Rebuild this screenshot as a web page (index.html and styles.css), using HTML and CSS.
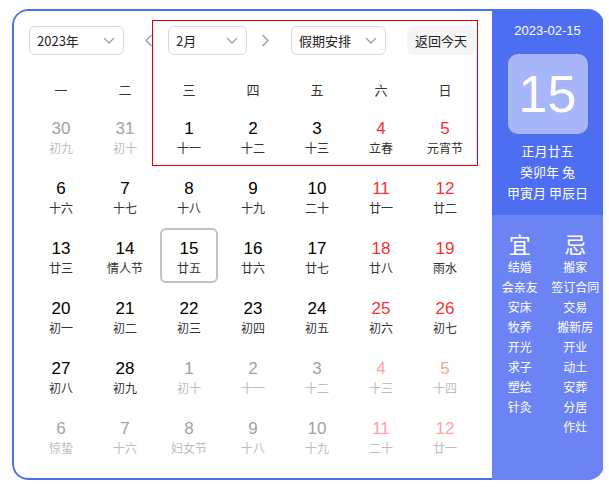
FILE: index.html
```html
<!DOCTYPE html>
<html lang="zh-CN">
<head>
<meta charset="utf-8">
<title>万年历</title>
<link rel="stylesheet" href="styles.css">
</head>
<body>
<div class="cal">
  <div class="main">
    <div class="toolbar">
      <div class="select sel-year"><span>2023年</span><svg class="caret" width="12" height="7" viewBox="0 0 12 7"><path d="M1 1l5 5 5-5" fill="none" stroke="#9a9ea8" stroke-width="1.3"/></svg></div>
      <div class="nav nav-prev"><svg width="9" height="13" viewBox="0 0 9 13"><path d="M7.5 1L2 6.5 7.5 12" fill="none" stroke="#a0a4ad" stroke-width="1.5"/></svg></div>
      <div class="select sel-month"><span>2月</span><svg class="caret" width="12" height="7" viewBox="0 0 12 7"><path d="M1 1l5 5 5-5" fill="none" stroke="#9a9ea8" stroke-width="1.3"/></svg></div>
      <div class="nav nav-next"><svg width="9" height="13" viewBox="0 0 9 13"><path d="M1.5 1L7 6.5 1.5 12" fill="none" stroke="#a0a4ad" stroke-width="1.5"/></svg></div>
      <div class="select sel-holiday"><span>假期安排</span><svg class="caret" width="12" height="7" viewBox="0 0 12 7"><path d="M1 1l5 5 5-5" fill="none" stroke="#9a9ea8" stroke-width="1.3"/></svg></div>
      <div class="today-btn">返回今天</div>
    </div>
    <div class="weekdays">
      <div>一</div><div>二</div><div>三</div><div>四</div><div>五</div><div>六</div><div>日</div>
    </div>
    <div class="days">
      <div class="day other"><span class="num">30</span><span class="lunar">初九</span></div>
      <div class="day other"><span class="num">31</span><span class="lunar">初十</span></div>
      <div class="day"><span class="num">1</span><span class="lunar">十一</span></div>
      <div class="day"><span class="num">2</span><span class="lunar">十二</span></div>
      <div class="day"><span class="num">3</span><span class="lunar">十三</span></div>
      <div class="day wknd"><span class="num">4</span><span class="lunar">立春</span></div>
      <div class="day wknd"><span class="num">5</span><span class="lunar">元宵节</span></div>

      <div class="day"><span class="num">6</span><span class="lunar">十六</span></div>
      <div class="day"><span class="num">7</span><span class="lunar">十七</span></div>
      <div class="day"><span class="num">8</span><span class="lunar">十八</span></div>
      <div class="day"><span class="num">9</span><span class="lunar">十九</span></div>
      <div class="day"><span class="num">10</span><span class="lunar">二十</span></div>
      <div class="day wknd"><span class="num">11</span><span class="lunar">廿一</span></div>
      <div class="day wknd"><span class="num">12</span><span class="lunar">廿二</span></div>

      <div class="day"><span class="num">13</span><span class="lunar">廿三</span></div>
      <div class="day"><span class="num">14</span><span class="lunar">情人节</span></div>
      <div class="day selected"><span class="num">15</span><span class="lunar">廿五</span></div>
      <div class="day"><span class="num">16</span><span class="lunar">廿六</span></div>
      <div class="day"><span class="num">17</span><span class="lunar">廿七</span></div>
      <div class="day wknd"><span class="num">18</span><span class="lunar">廿八</span></div>
      <div class="day wknd"><span class="num">19</span><span class="lunar">雨水</span></div>

      <div class="day"><span class="num">20</span><span class="lunar">初一</span></div>
      <div class="day"><span class="num">21</span><span class="lunar">初二</span></div>
      <div class="day"><span class="num">22</span><span class="lunar">初三</span></div>
      <div class="day"><span class="num">23</span><span class="lunar">初四</span></div>
      <div class="day"><span class="num">24</span><span class="lunar">初五</span></div>
      <div class="day wknd"><span class="num">25</span><span class="lunar">初六</span></div>
      <div class="day wknd"><span class="num">26</span><span class="lunar">初七</span></div>

      <div class="day"><span class="num">27</span><span class="lunar">初八</span></div>
      <div class="day"><span class="num">28</span><span class="lunar">初九</span></div>
      <div class="day other"><span class="num">1</span><span class="lunar">初十</span></div>
      <div class="day other"><span class="num">2</span><span class="lunar">十一</span></div>
      <div class="day other"><span class="num">3</span><span class="lunar">十二</span></div>
      <div class="day other wknd"><span class="num">4</span><span class="lunar">十三</span></div>
      <div class="day other wknd"><span class="num">5</span><span class="lunar">十四</span></div>

      <div class="day other"><span class="num">6</span><span class="lunar">惊蛰</span></div>
      <div class="day other"><span class="num">7</span><span class="lunar">十六</span></div>
      <div class="day other"><span class="num">8</span><span class="lunar">妇女节</span></div>
      <div class="day other"><span class="num">9</span><span class="lunar">十八</span></div>
      <div class="day other"><span class="num">10</span><span class="lunar">十九</span></div>
      <div class="day other wknd"><span class="num">11</span><span class="lunar">二十</span></div>
      <div class="day other wknd"><span class="num">12</span><span class="lunar">廿一</span></div>
    </div>
  </div>
  <div class="side">
    <div class="side-top">
      <div class="side-date">2023-02-15</div>
      <div class="big-day">15</div>
      <div class="side-line first">正月廿五</div>
      <div class="side-line">癸卯年 兔</div>
      <div class="side-line">甲寅月 甲辰日</div>
    </div>
    <div class="side-bottom">
      <div class="col">
        <div class="col-head">宜</div>
        <div class="item">结婚</div>
        <div class="item">会亲友</div>
        <div class="item">安床</div>
        <div class="item">牧养</div>
        <div class="item">开光</div>
        <div class="item">求子</div>
        <div class="item">塑绘</div>
        <div class="item">针灸</div>
      </div>
      <div class="col">
        <div class="col-head">忌</div>
        <div class="item">搬家</div>
        <div class="item">签订合同</div>
        <div class="item">交易</div>
        <div class="item">搬新房</div>
        <div class="item">开业</div>
        <div class="item">动土</div>
        <div class="item">安葬</div>
        <div class="item">分居</div>
        <div class="item">作灶</div>
      </div>
    </div>
  </div>
  <div class="highlight"></div>
</div>
</body>
</html>
```

FILE: styles.css
```css
* { box-sizing: border-box; }
html, body { margin: 0; padding: 0; background: #fff; }
body {
  font-family: "Noto Sans CJK SC", "Noto Sans", sans-serif;
  color: #333;
}
.cal {
  position: relative;
  margin: 9px 0 0 12px;
  width: 592px;
  height: 471px;
  border-radius: 16px;
  overflow: hidden;
  display: flex;
  box-shadow: 0 2px 6px rgba(0, 0, 0, 0.06);
}
.main {
  width: 480px;
  height: 471px;
  border: 2px solid #4e6ef2;
  border-right: none;
  border-radius: 16px 0 0 16px;
  padding: 15px 0 0 15px;
}
.toolbar {
  display: flex;
  align-items: center;
  height: 29px;
}
.select {
  height: 29px;
  border: 1px solid #d7d9df;
  border-radius: 6px;
  display: flex;
  align-items: center;
  justify-content: space-between;
  padding: 0 8px 0 7px;
  font-size: 13px;
  line-height: 27px;
  color: #222;
}
.sel-year { width: 95px; }
.sel-month { width: 79px; margin-left: 10px; }
.sel-holiday { width: 95px; margin-left: 16px; }
.nav {
  width: 20px;
  height: 29px;
  display: flex;
  align-items: center;
  justify-content: center;
}
.nav-prev { margin-left: 14px; }
.nav-next { margin-left: 8px; }
.today-btn {
  margin-left: 21px;
  width: 68px;
  height: 29px;
  border-radius: 6px;
  background: #f5f5f6;
  font-size: 13px;
  line-height: 29px;
  text-align: center;
  color: #222;
}
.weekdays {
  margin-top: 15px;
  display: grid;
  grid-template-columns: repeat(7, 64px);
  height: 38px;
  align-items: center;
  font-size: 13px;
  color: #333;
  text-align: center;
}
.days {
  display: grid;
  grid-template-columns: repeat(7, 64px);
  grid-auto-rows: 55px;
  row-gap: 5px;
}
.day {
  width: 58px;
  height: 55px;
  justify-self: center;
  display: flex;
  flex-direction: column;
  align-items: center;
  padding-top: 11px;
  border-radius: 6px;
}
.num {
  font-family: "Liberation Sans", Arial, sans-serif;
  font-size: 17px;
  line-height: 20px;
  color: #000;
}
.lunar {
  font-size: 12px;
  line-height: 18px;
  color: #333;
  white-space: nowrap;
}
.wknd .num { color: #f73131; }
.other .num { color: #a2a2a2; }
.other .lunar { color: #bdbdbd; }
.other.wknd .num { color: #fca3a3; }
.selected {
  border: 2px solid #c0c2ca;
  padding-top: 9px;
}
.side {
  width: 111px;
  height: 471px;
  display: flex;
  flex-direction: column;
  color: #fff;
  text-align: center;
}
.side-top {
  height: 206px;
  background: #4e6ef2;
  padding-top: 12px;
  display: flex;
  flex-direction: column;
  align-items: center;
}
.side-date {
  font-family: "Liberation Sans", Arial, sans-serif;
  font-size: 13px;
  line-height: 20px;
}
.big-day {
  margin-top: 13px;
  width: 80px;
  height: 80px;
  border-radius: 10px;
  background: #a6b6f8;
  font-family: "Liberation Sans", Arial, sans-serif;
  font-size: 52px;
  line-height: 80px;
}
.side-line {
  font-size: 13px;
  line-height: 21px;
  white-space: nowrap;
}
.side-line.first { margin-top: 6px; }
.side-bottom {
  flex: 1;
  background: #6b83f3;
  display: flex;
  padding-top: 14px;
}
.col {
  width: 50%;
  display: flex;
  flex-direction: column;
  align-items: center;
}
.col-head {
  font-size: 22px;
  line-height: 28px;
}
.item {
  font-size: 12px;
  line-height: 20px;
  white-space: nowrap;
}
.highlight {
  position: absolute;
  left: 140px;
  top: 11px;
  width: 326px;
  height: 146px;
  border: 1px solid #e50000;
  pointer-events: none;
}
```
